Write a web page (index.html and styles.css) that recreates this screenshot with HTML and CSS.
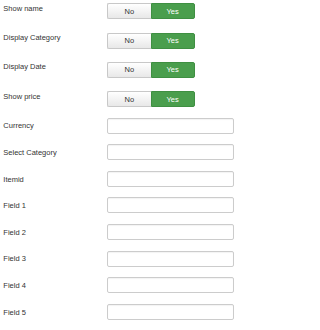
FILE: index.html
```html
<!DOCTYPE html>
<html>
<head>
<meta charset="utf-8">
<link rel="stylesheet" href="styles.css">
</head>
<body>
<form class="form">
  <div class="row row-toggle">
    <label class="label">Show name</label>
    <div class="toggle"><span class="opt opt-no">No</span><span class="opt opt-yes">Yes</span></div>
  </div>
  <div class="row row-toggle">
    <label class="label">Display Category</label>
    <div class="toggle"><span class="opt opt-no">No</span><span class="opt opt-yes">Yes</span></div>
  </div>
  <div class="row row-toggle">
    <label class="label">Display Date</label>
    <div class="toggle"><span class="opt opt-no">No</span><span class="opt opt-yes">Yes</span></div>
  </div>
  <div class="row row-toggle">
    <label class="label">Show price</label>
    <div class="toggle"><span class="opt opt-no">No</span><span class="opt opt-yes">Yes</span></div>
  </div>
  <div class="row row-input">
    <label class="label">Currency</label>
    <input class="field" type="text">
  </div>
  <div class="row row-input">
    <label class="label">Select Category</label>
    <input class="field" type="text">
  </div>
  <div class="row row-input">
    <label class="label">Itemid</label>
    <input class="field" type="text">
  </div>
  <div class="row row-input">
    <label class="label">Field 1</label>
    <input class="field" type="text">
  </div>
  <div class="row row-input">
    <label class="label">Field 2</label>
    <input class="field" type="text">
  </div>
  <div class="row row-input">
    <label class="label">Field 3</label>
    <input class="field" type="text">
  </div>
  <div class="row row-input">
    <label class="label">Field 4</label>
    <input class="field" type="text">
  </div>
  <div class="row row-input">
    <label class="label">Field 5</label>
    <input class="field" type="text">
  </div>
</form>
</body>
</html>
```
FILE: styles.css
```css
html, body {
  margin: 0;
  padding: 0;
  background: #ffffff;
}
body {
  font-family: "Liberation Sans", Arial, sans-serif;
  font-size: 7.5px;
  color: #333333;
}
.form {
  display: flex;
  flex-direction: column;
  padding: 3.3px 0 0 3.3px;
}
.row {
  display: grid;
  grid-template-columns: 104px 1fr;
  align-items: start;
}
.row-toggle + .row-toggle {
  margin-top: 13.25px;
}
.row-input {
  margin-top: 10.6px;
}
.label {
  line-height: 10px;
  color: #333333;
}
.row-toggle .label {
  padding-top: 0.6px;
}
.row-input .label {
  padding-top: 3.8px;
}
.toggle {
  display: flex;
  width: 87.4px;
  height: 16px;
}
.opt {
  flex: 1;
  display: flex;
  align-items: center;
  justify-content: center;
  box-sizing: border-box;
  height: 16px;
  font-size: 7.5px;
}
.opt-no {
  background: linear-gradient(#ffffff, #e8e8e8);
  border: 1px solid #c8c8c8;
  border-right: none;
  border-radius: 2px 0 0 2px;
  color: #333333;
}
.opt-yes {
  background: #4a9e4d;
  border: 1px solid #3f8f42;
  border-radius: 0 2px 2px 0;
  color: #ffffff;
}
.field {
  box-sizing: border-box;
  width: 126.4px;
  height: 16px;
  margin: 0;
  padding: 0 3px;
  border: 1px solid #cccccc;
  border-radius: 2px;
  background: #ffffff;
  box-shadow: inset 0 1px 1px rgba(0, 0, 0, 0.05);
  font-family: "Liberation Sans", Arial, sans-serif;
  font-size: 7.5px;
}
```
